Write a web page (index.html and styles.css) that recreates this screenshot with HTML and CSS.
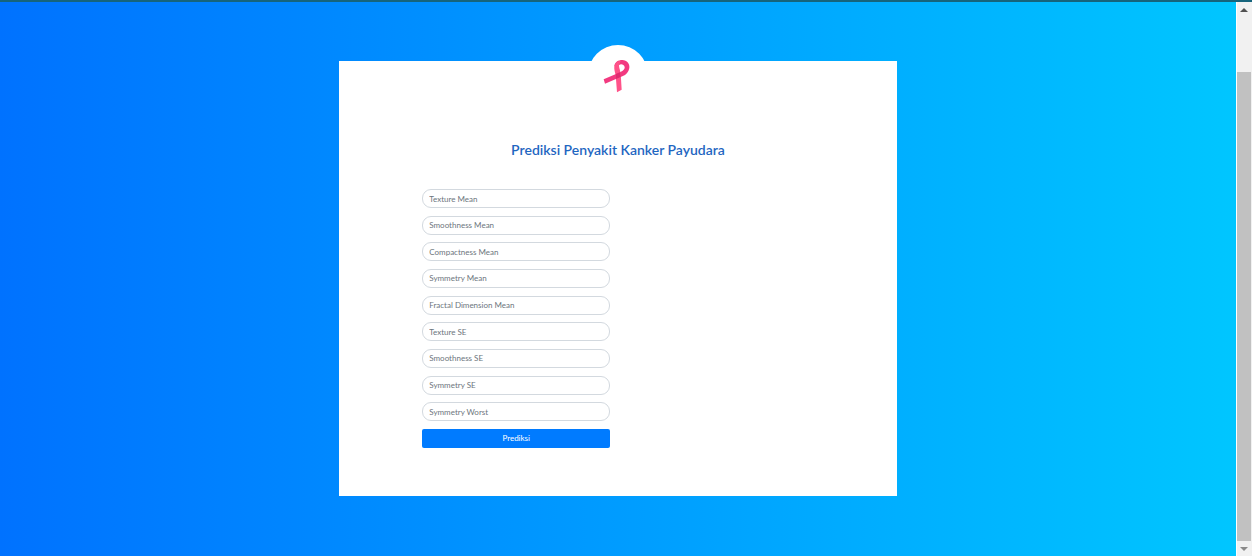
FILE: index.html
```html
<!DOCTYPE html>
<html lang="id">
<head>
<meta charset="utf-8">
<title>Prediksi Penyakit Kanker Payudara</title>
<link rel="stylesheet" href="styles.css">
</head>
<body>
<div class="window">
  <main class="page">
    <section class="card">
      <div class="logo">
        <svg viewBox="24 30 180 180" aria-hidden="true">
          <path fill="#f23a80" d="M103 94C104 81 115 75 127 75C141 76 150 86 148 99C146 111 139 119 127 124L75 146L71 133L117 113C127 109 135 103 134 96C132 88 123 86 117 90Z"/>
          <path fill="#ff5289" d="M103 94C106 83 113 78 122 77L118 88C115 93 120 103 122 115L125 164L111 172L107 120C104 109 102 102 103 94Z"/>
          <path fill="#e02b70" d="M107 117L121 111L122 126L108 132Z"/>
        </svg>
      </div>
      <h1 class="title">Prediksi Penyakit Kanker Payudara</h1>
      <form class="form">
        <input class="field" type="text" placeholder="Texture Mean" aria-label="Texture Mean">
        <input class="field" type="text" placeholder="Smoothness Mean" aria-label="Smoothness Mean">
        <input class="field" type="text" placeholder="Compactness Mean" aria-label="Compactness Mean">
        <input class="field" type="text" placeholder="Symmetry Mean" aria-label="Symmetry Mean">
        <input class="field" type="text" placeholder="Fractal Dimension Mean" aria-label="Fractal Dimension Mean">
        <input class="field" type="text" placeholder="Texture SE" aria-label="Texture SE">
        <input class="field" type="text" placeholder="Smoothness SE" aria-label="Smoothness SE">
        <input class="field" type="text" placeholder="Symmetry SE" aria-label="Symmetry SE">
        <input class="field" type="text" placeholder="Symmetry Worst" aria-label="Symmetry Worst">
        <button class="submit" type="button">Prediksi</button>
      </form>
    </section>
  </main>
  <div class="scrollbar" aria-hidden="true">
    <svg class="arrow" viewBox="0 0 15 15"><path fill="#505050" d="M3 10L7 6L11 10Z"/></svg>
    <div class="track"><div class="thumb"></div></div>
    <svg class="arrow" viewBox="0 0 15 15"><path fill="#8a8a8a" d="M3 6L7 10L11 6Z"/></svg>
  </div>
</div>
</body>
</html>
```
FILE: styles.css
```css
* { box-sizing: border-box; }

body {
  margin: 0;
  font-family: Lato, "Noto Sans", sans-serif;
}

.window {
  display: flex;
  min-height: 100vh;
  border-top: 2px solid #16647c;
}

.page {
  flex: 1;
  padding: 59px 0 60px;
  background: linear-gradient(to right, #0072ff, #00c6ff);
}

.card {
  width: 45.1%;
  margin: 0 auto;
  padding: 0 83px 48px;
  background: #fff;
}

.logo {
  width: 60px;
  height: 60px;
  margin: 0 auto;
  border-radius: 50%;
  background: #fff;
  transform: translateY(-16px);
}

.logo svg { display: block; width: 100%; }

.title {
  margin: 0;
  padding: 19px 0 29px;
  color: #1f66c1;
  font-size: 14px;
  line-height: 20px;
  font-weight: 600;
  text-align: center;
  white-space: nowrap;
}

.form {
  display: flex;
  flex-direction: column;
  justify-content: space-between;
  width: 48%;
  min-height: 259px;
}

.field {
  width: 100%;
  height: 19px;
  padding: 0 6px;
  border: 1px solid #d3d9df;
  border-radius: 9px;
  background: #fff;
  font: 8px/16px Lato, "Noto Sans", sans-serif;
}

.field::placeholder { color: #6c757d; opacity: 1; }

.submit {
  width: 100%;
  height: 19px;
  padding: 0;
  border: 0;
  border-radius: 2px;
  background: #007bff;
  color: #fff;
  font: 8px/19px Lato, "Noto Sans", sans-serif;
}

.scrollbar {
  display: flex;
  flex-direction: column;
  width: 16px;
  border-left: 1px solid #fff;
  background: #f1f1f1;
}

.arrow { display: block; width: 15px; height: 15px; }

.track {
  display: flex;
  flex: 1;
  flex-direction: column;
  justify-content: flex-end;
  padding-right: 1px;
}

.thumb { height: 89.5%; background: #c1c1c1; }
```
